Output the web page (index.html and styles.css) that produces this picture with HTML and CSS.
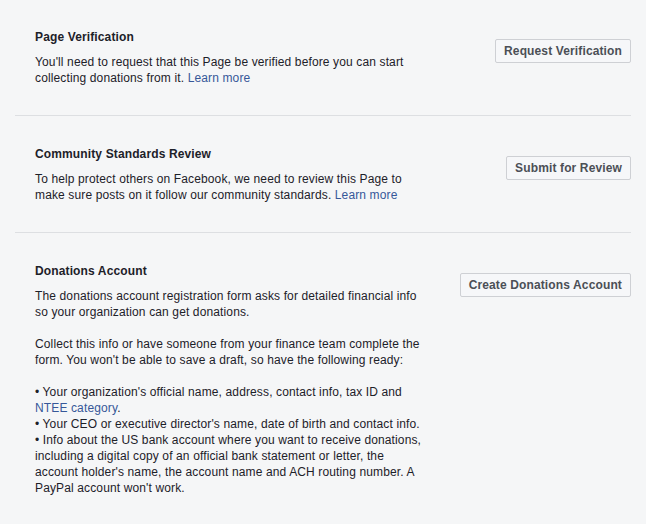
FILE: index.html
```html
<!DOCTYPE html>
<html lang="en">

<head>
    <meta charset="UTF-8">
    <meta name="viewport" content="width=device-width, initial-scale=1.0">
    <title>Donations Setup</title>
    <link rel="stylesheet" href="styles.css">
</head>

<body>
    <div class="settings">
        <section class="row">
            <div class="info">
                <h2>Page Verification</h2>
                <p>You'll need to request that this Page be verified before you can start collecting donations from
                    it. <a href="#">Learn more</a></p>
            </div>
            <button>Request Verification</button>
        </section>
        <section class="row">
            <div class="info">
                <h2>Community Standards Review</h2>
                <p>To help protect others on Facebook, we need to review this Page to make sure posts on it follow our
                    community standards. <a href="#">Learn more</a></p>
            </div>
            <button>Submit for Review</button>
        </section>
        <section class="row">
            <div class="info">
                <h2>Donations Account</h2>
                <p>The donations account registration form asks for detailed financial info so your organization can
                    get donations.<br><br>Collect this info or have someone from your finance team complete the form.
                    You won't be able to save a draft, so have the following ready:<br><br>&bull; Your organization's
                    official name, address, contact info, tax ID and <a href="#">NTEE category</a>.<br>&bull; Your CEO
                    or executive director's name, date of birth and contact info.<br>&bull; Info about the US bank
                    account where you want to receive donations, including a digital copy of an official bank
                    statement or letter, the account holder's name, the account name and ACH routing number. A PayPal
                    account won't work.</p>
            </div>
            <button>Create Donations Account</button>
        </section>
    </div>
</body>

</html>
```

FILE: styles.css
```css
* {
    padding: 0;
    margin: 0;
    box-sizing: border-box;
}

body {
    background-color: #f5f6f7;
    font-family: "Liberation Sans", Arial, sans-serif;
    font-size: 12px;
    line-height: 16px;
    letter-spacing: 0.13px;
    color: #1d2129;
}

.settings {
    margin: 0 15px;
}

.row {
    display: flex;
    justify-content: space-between;
    align-items: flex-start;
    padding: 30px 0 29px 20px;
    border-bottom: 1px solid #dddfe2;
}

.row:first-child {
    padding-top: 29px;
}

.row:last-child {
    border-bottom: none;
}

.info {
    width: 390px;
}

.info h2 {
    font-size: 12px;
    font-weight: bold;
    margin-bottom: 9px;
}

.info a {
    color: #365899;
    text-decoration: none;
}

button {
    margin-top: 10px;
    height: 24px;
    padding: 0 8px;
    background-color: #f6f7f9;
    border: 1px solid #ced0d4;
    border-radius: 2px;
    color: #4b4f56;
    font-family: "Liberation Sans", Arial, sans-serif;
    font-size: 12px;
    font-weight: bold;
    letter-spacing: 0.13px;
    cursor: pointer;
}
```
